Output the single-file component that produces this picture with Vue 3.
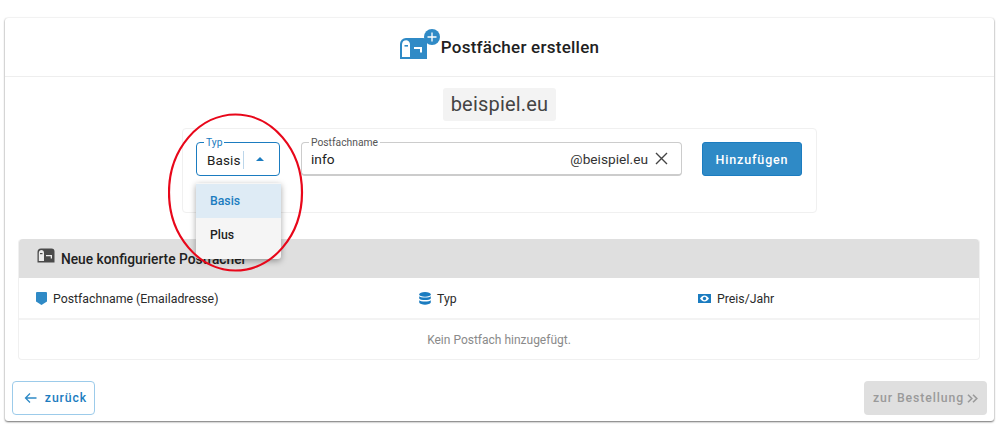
<template>
  <div class="page">
    <div class="card">
      <header class="head">
        <span class="head-icon">
          <svg width="27" height="21" viewBox="0 0 27 21">
            <path d="M6 0h17a4 4 0 0 1 4 4v17H0V6a6 6 0 0 1 6-6z" fill="#2f8ac6" />
            <path d="M6.500 2.200A4.500 4.500 0 0 1 10 6.500V19H2V6.500a4.500 4.500 0 0 1 4.500-4.300z" fill="#fff" />
            <rect x="4.500" y="7" width="3.500" height="1.600" fill="#2f8ac6" />
            <path d="M14 9h8v5.500h-2V11h-6z" fill="#fff" />
          </svg>
          <span class="plus-badge">
            <svg width="10" height="10" viewBox="0 0 10 10">
              <path d="M5 .5v9M.5 5h9" stroke="#fff" stroke-width="1.300" fill="none" />
            </svg>
          </span>
        </span>
        <h1>Postfächer erstellen</h1>
      </header>

      <div class="domain-row">
        <span class="domain">beispiel.eu</span>
      </div>

      <div class="form-box">
        <div class="select">
          <span class="float-label blue">Typ</span>
          <span class="select-val">Basis</span>
          <span class="divider"></span>
          <span class="caret"></span>
          <ul class="menu">
            <li v-for="opt in options" :key="opt" :class="{ active: opt === selected }">{{ opt }}</li>
          </ul>
        </div>
        <div class="field">
          <span class="float-label">Postfachname</span>
          <span class="field-val">info</span>
          <span class="suffix">@beispiel.eu</span>
          <svg class="clear" width="13" height="13" viewBox="0 0 13 13">
            <path d="M1 1l11 11M12 1L1 12" stroke="#444" stroke-width="1.400" fill="none" />
          </svg>
        </div>
        <button class="add">Hinzufügen</button>
      </div>

      <section class="table">
        <div class="table-head">
          <svg width="18" height="15" viewBox="0 0 18 15">
            <path d="M4 .5h10.500A3 3 0 0 1 17.500 3.500v11H.5V4A3.500 3.500 0 0 1 4 .5z" fill="#4a4a4a" />
            <path d="M4 2a3 3 0 0 1 3 3v8H1.800V5A3 3 0 0 1 4 2z" fill="#ececec" />
            <rect x="3" y="5" width="2.500" height="1.200" fill="#4a4a4a" />
            <path d="M9 7h6v3.500h-1.300V8.300H9z" fill="#ececec" />
          </svg>
          <span>Neue konfigurierte Postfächer</span>
        </div>
        <div class="cols">
          <div class="col">
            <svg width="11" height="13" viewBox="0 0 11 13">
              <path d="M1 0h9a1 1 0 0 1 1 1v8.500L5.500 13 0 9.500V1a1 1 0 0 1 1-1z" fill="#2f8ac6" />
            </svg>
            Postfachname (Emailadresse)
          </div>
          <div class="col">
            <svg width="12" height="13" viewBox="0 0 12 13">
              <ellipse cx="6" cy="2.400" rx="5.800" ry="2.400" fill="#1b7cc0" />
              <path d="M.2 4.200c1 1.700 10.600 1.700 11.600 0v2.300c-1 2-10.600 2-11.600 0zM.2 8.200c1 1.700 10.600 1.700 11.600 0v2.400c-1 2.800-10.600 2.800-11.600 0z" fill="#1b7cc0" />
            </svg>
            Typ
          </div>
          <div class="col">
            <svg width="13" height="9" viewBox="0 0 13 9">
              <path fill-rule="evenodd" d="M0 0h13v9H0zM6.500 1.500C4.500 1.500 2.800 3 2 4.500 2.800 6 4.500 7.500 6.500 7.500S10.200 6 11 4.500C10.200 3 8.500 1.500 6.500 1.500z" fill="#1b7cc0" />
              <circle cx="6.500" cy="4.500" r="1.700" fill="#1b7cc0" />
            </svg>
            Preis/Jahr
          </div>
        </div>
        <div class="empty">Kein Postfach hinzugefügt.</div>
      </section>

      <footer class="foot">
        <button class="back">
          <svg width="13" height="12" viewBox="0 0 13 12">
            <path d="M12.500 6H1.500M6 1.500L1.500 6 6 10.500" stroke="#2f8ac6" stroke-width="1.300" fill="none" />
          </svg>
          zurück
        </button>
        <button class="next" disabled>
          zur Bestellung
          <svg width="11" height="9" viewBox="0 0 11 9">
            <path d="M1 .7l3.800 3.800L1 8.300M6 .7l3.800 3.800L6 8.300" stroke="#9a9a9a" stroke-width="1.600" fill="none" />
          </svg>
        </button>
      </footer>
    </div>

    <!-- hand drawn marker around the dropdown -->
    <svg class="marker" width="136" height="160" viewBox="0 0 136 160">
      <ellipse cx="67.500" cy="79.500" rx="66.500" ry="78" fill="none" stroke="#e8071a" stroke-width="2.200" />
    </svg>
  </div>
</template>

<script setup>
const options = ['Basis', 'Plus']
const selected = 'Basis'
</script>

<style>
html, body {
  margin: 0;
  background: #fff;
}
</style>

<style scoped>
.page {
  position: relative;
  box-sizing: border-box;
  width: 1000px;
  height: 440px;
  padding: 18px 6px 0 5px;
  font-family: Roboto, "Liberation Sans", sans-serif;
  color: #212121;
  overflow: hidden;
}

.card {
  box-sizing: border-box;
  height: 403px;
  background: #fff;
  border-radius: 3px;
  box-shadow: 0 1px 2px rgba(0, 0, 0, 0.55), 0 0 2px rgba(0, 0, 0, 0.1);
  display: flex;
  flex-direction: column;
}

.head {
  height: 59px;
  flex: none;
  box-sizing: border-box;
  border-bottom: 1px solid #eee;
  display: flex;
  align-items: center;
  justify-content: center;
  gap: 1px;
}

.head-icon {
  position: relative;
  display: block;
  width: 40px;
  height: 30px;
  margin-bottom: 7px;
}

.head-icon > svg {
  position: absolute;
  left: 0;
  bottom: 0;
}

.plus-badge {
  position: absolute;
  right: 0;
  top: 0;
  width: 16px;
  height: 16px;
  border-radius: 50%;
  background: #2f8ac6;
  display: flex;
  align-items: center;
  justify-content: center;
}

.head h1 {
  margin: 0 0 1px;
  font-size: 17px;
  font-weight: 500;
  letter-spacing: 0.25px;
}

.domain-row {
  display: flex;
  justify-content: center;
  margin-top: 11px;
}

.domain {
  background: #f3f3f3;
  border-radius: 3px;
  padding: 0 8px;
  height: 33px;
  line-height: 33px;
  font-size: 20px;
  color: #444;
  letter-spacing: 0.2px;
}

.form-box {
  box-sizing: border-box;
  width: 635px;
  height: 85px;
  margin: 7px 0 0 177px;
  padding: 13px 14px 0 13px;
  border: 1px solid #f0f0f0;
  border-radius: 4px;
  display: flex;
  align-items: flex-start;
}

.select {
  position: relative;
  box-sizing: border-box;
  width: 84px;
  height: 34px;
  border: 1px solid #1b7cc0;
  border-radius: 4px;
  display: flex;
  align-items: center;
  padding: 2px 0 0 10px;
  font-size: 13.5px;
}

.float-label {
  position: absolute;
  top: -6px;
  left: 7px;
  padding: 0 2px;
  background: #fff;
  font-size: 10.3px;
  line-height: 11px;
  color: #555;
}

.float-label.blue {
  color: #1b7cc0;
}

.select-val {
  letter-spacing: 0.1px;
}

.divider {
  width: 1px;
  height: 18px;
  background: #bcd6ea;
  margin-left: 3px;
}

.caret {
  width: 0;
  height: 0;
  margin-left: 12px;
  margin-top: -3px;
  border-left: 4px solid transparent;
  border-right: 4px solid transparent;
  border-bottom: 4px solid #1b7cc0;
}

.menu {
  position: absolute;
  z-index: 2;
  top: 40px;
  left: -1px;
  width: 85px;
  margin: 0;
  padding: 0 0 7px;
  list-style: none;
  background: #f5f5f5;
  border-radius: 0 0 3px 3px;
  box-shadow: 0 2px 6px rgba(0, 0, 0, 0.35);
  font-size: 12.25px;
  font-weight: 500;
}

.menu::before {
  content: '';
  display: block;
  height: 1px;
}

.menu li {
  height: 34px;
  line-height: 34px;
  padding-left: 14px;
  color: #212121;
}

.menu li.active {
  background: #deebf5;
  color: #1b7cc0;
}

.field {
  position: relative;
  box-sizing: border-box;
  width: 381px;
  height: 34px;
  margin-left: 21px;
  border: 1px solid #ccc;
  border-bottom-width: 2px;
  border-radius: 4px;
  display: flex;
  align-items: center;
  padding: 0 20px 0 9px;
  font-size: 13.7px;
}

.suffix {
  margin-left: auto;
  color: #333;
}

.clear {
  margin-left: 7px;
  margin-right: -7px;
}

.add {
  width: 100px;
  height: 34px;
  margin-left: 20px;
  border: 1px solid #1b7cc0;
  border-radius: 3px;
  background: #2f8ac6;
  color: #fff;
  font: 500 12.5px Roboto, "Liberation Sans", sans-serif;
  letter-spacing: 0.85px;
}

.table {
  box-sizing: border-box;
  width: 962px;
  height: 121px;
  margin: 26px 0 0 13px;
  border: 1px solid #f0f0f0;
  border-top: 0;
  border-radius: 4px;
}

.table-head {
  height: 39px;
  background: #dfdfdf;
  border-radius: 4px 4px 0 0;
  display: flex;
  align-items: center;
  gap: 6px;
  padding: 0 0 0 18px;
  font-size: 13.75px;
  font-weight: 500;
}

.table-head svg {
  margin-top: -6px;
}

.cols {
  box-sizing: border-box;
  height: 42px;
  border-bottom: 2px solid #f3f3f3;
  display: grid;
  grid-template-columns: 383px 279px 1fr;
  align-items: center;
  padding: 1px 0 0 17px;
  font-size: 12.3px;
  color: #2a2a2a;
}

.col {
  display: flex;
  align-items: center;
  gap: 6px;
}

.empty {
  height: 39px;
  display: flex;
  align-items: center;
  justify-content: center;
  font-size: 12px;
  color: #8a8a8a;
}

.foot {
  display: flex;
  justify-content: space-between;
  padding: 21px 7px 0 7px;
}

.back,
.next {
  box-sizing: border-box;
  height: 34px;
  border-radius: 4px;
  font: 500 12.25px Roboto, "Liberation Sans", sans-serif;
  letter-spacing: 0.9px;
  display: flex;
  align-items: center;
  justify-content: center;
  padding: 0;
}

.back {
  width: 83px;
  gap: 8px;
  padding-left: 4px;
  background: #fff;
  border: 1px solid #9ccbea;
  color: #1b7cc0;
}

.next {
  width: 123px;
  gap: 3px;
  background: #dfdfdf;
  border: 0;
  color: #9a9a9a;
}

.marker {
  position: absolute;
  z-index: 3;
  left: 168px;
  top: 113px;
}
</style>
